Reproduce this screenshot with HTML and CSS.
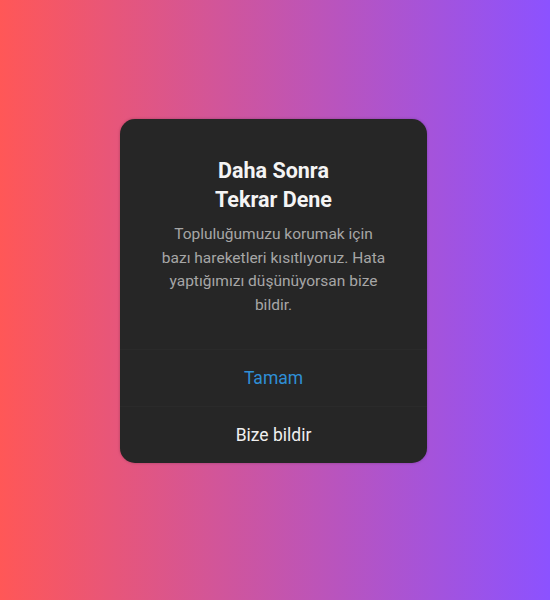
FILE: index.html
```html
<!DOCTYPE html>
<html lang="tr">
<head>
<meta charset="utf-8">
<link rel="stylesheet" href="styles.css">
</head>
<body>
<div class="page">
  <div class="dialog">
    <div class="content">
      <h1 class="title">Daha Sonra<br>Tekrar Dene</h1>
      <p class="message">Topluluğumuzu korumak için<br>bazı hareketleri kısıtlıyoruz. Hata<br>yaptığımızı düşünüyorsan bize<br>bildir.</p>
    </div>
    <button class="action primary">Tamam</button>
    <button class="action">Bize bildir</button>
  </div>
</div>
</body>
</html>
```

FILE: styles.css
```css
html, body {
  margin: 0;
  padding: 0;
  height: 100%;
}
body {
  background: linear-gradient(to right, #ff5757, #8c52ff);
  font-family: Roboto, "Noto Sans", Arial, sans-serif;
}
.page {
  padding: 119px 0 0 120px;
}
.dialog {
  width: 307px;
  background: #262626;
  border-radius: 15px;
  display: flex;
  flex-direction: column;
  overflow: hidden;
  box-shadow: 0 0 3px rgba(0,0,0,0.25);
}
.content {
  padding: 37px 20px 32px;
  text-align: center;
}
.title {
  margin: 0;
  font-size: 21.5px;
  line-height: 29px;
  font-weight: 700;
  color: #f4f4f4;
}
.message {
  margin: 9px 0 0;
  font-size: 15.5px;
  line-height: 23.5px;
  color: #a6a6a6;
}
.action {
  height: 57px;
  border: 0;
  border-top: 1px solid #2a2a2a;
  background: transparent;
  font-family: inherit;
  font-size: 17.5px;
  color: #efefef;
  padding: 0;
}
.action.primary {
  color: #2f8fd6;
}
```
